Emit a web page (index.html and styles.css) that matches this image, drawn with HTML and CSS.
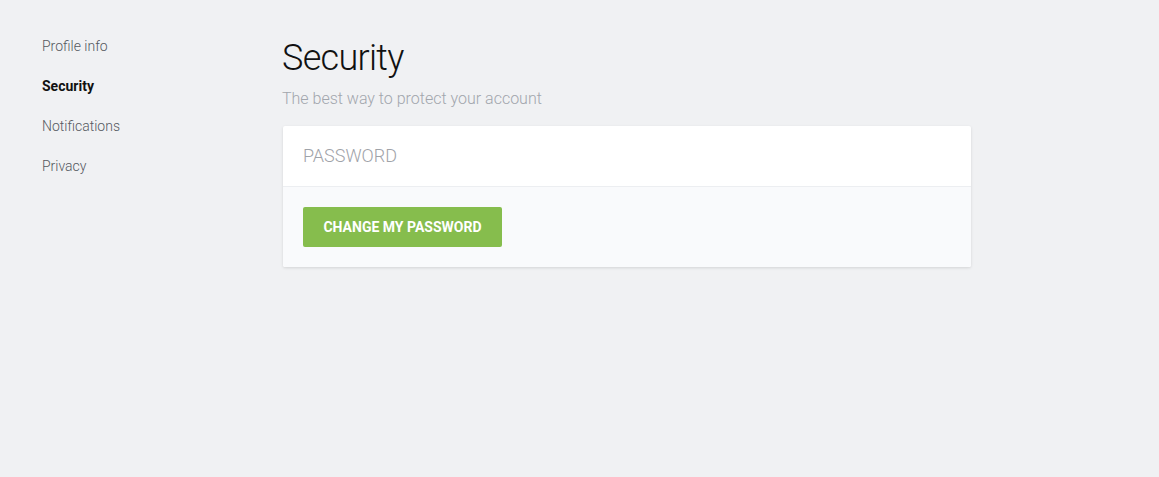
FILE: index.html
```html
<!DOCTYPE html>
<html>
<head>
<meta charset="utf-8">
<link rel="stylesheet" href="styles.css">
</head>
<body>
<div class="layout">
  <nav class="sidebar">
    <a class="nav-item">Profile info</a>
    <a class="nav-item active">Security</a>
    <a class="nav-item">Notifications</a>
    <a class="nav-item">Privacy</a>
  </nav>
  <main class="content">
    <h1 class="title">Security</h1>
    <p class="subtitle">The best way to protect your account</p>
    <section class="card">
      <div class="card-header">PASSWORD</div>
      <div class="card-body">
        <button class="btn">CHANGE MY PASSWORD</button>
      </div>
    </section>
  </main>
</div>
</body>
</html>
```
FILE: styles.css
```css
html, body {
  margin: 0;
  padding: 0;
  height: 100%;
  background: #f0f1f3;
  font-family: Roboto, "Liberation Sans", sans-serif;
}
.layout {
  display: flex;
  padding: 36px 0 0 42px;
}
.sidebar {
  width: 240px;
  display: flex;
  flex-direction: column;
}
.nav-item {
  font-size: 14px;
  line-height: 20px;
  height: 40px;
  color: #55595f;
  font-weight: 300;
}
.nav-item.active {
  color: #111;
  font-weight: 700;
}
.content {
  width: 690px;
}
.title {
  margin: 0;
  font-size: 36px;
  font-weight: 300;
  line-height: 44px;
  color: #111;
  letter-spacing: -0.7px;
}
.subtitle {
  margin: 9px 0 0;
  font-size: 16px;
  font-weight: 300;
  line-height: 20px;
  color: #a2a6ad;
}
.card {
  margin: 17px 0 0 1px;
  width: 688px;
  background: #fff;
  border-radius: 2px;
  box-shadow: 0 1px 3px rgba(0,0,0,0.12);
  overflow: hidden;
}
.card-header {
  height: 61px;
  box-sizing: border-box;
  padding: 20px 20px 0;
  font-size: 18px;
  line-height: 20px;
  font-weight: 300;
  color: #9fa3a9;
  border-bottom: 1px solid #eceef1;
}
.card-body {
  background: #f9fafc;
  padding: 20px;
}
.btn {
  display: block;
  height: 40px;
  width: 199px;
  border: none;
  border-radius: 2px;
  background: #86bd4d;
  color: #fff;
  font-family: Roboto, "Liberation Sans", sans-serif;
  font-weight: 700;
  font-size: 14px;
  padding: 0;
}
```
